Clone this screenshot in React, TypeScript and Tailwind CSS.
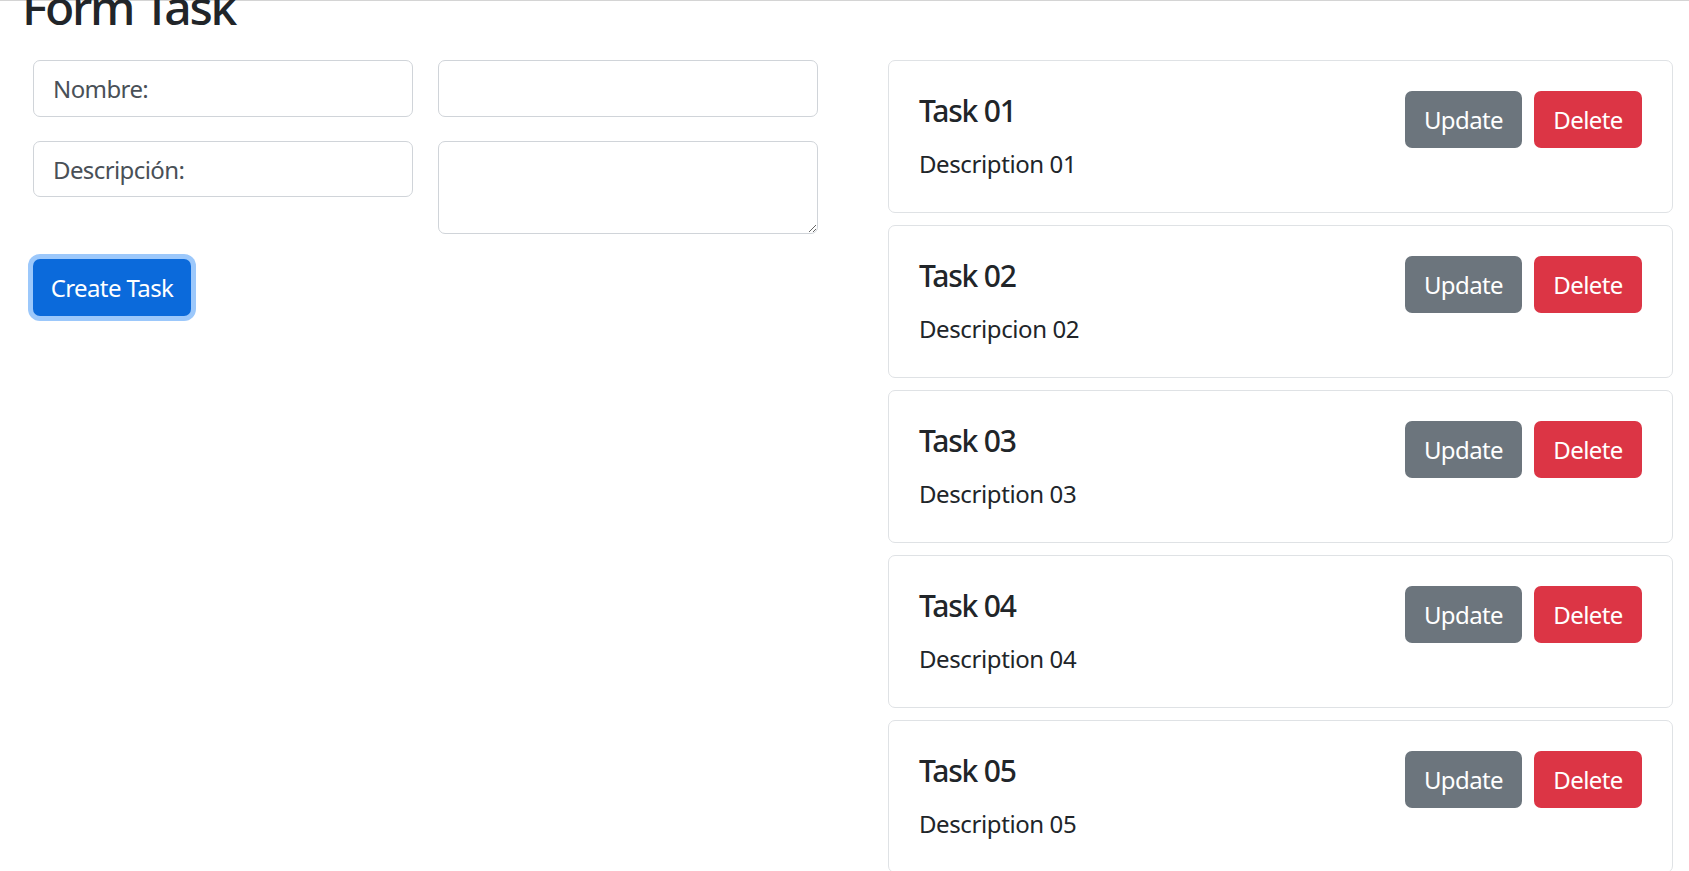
import React from 'react';

const tasks = [
  { title: 'Task 01', description: 'Description 01' },
  { title: 'Task 02', description: 'Descripcion 02' },
  { title: 'Task 03', description: 'Description 03' },
  { title: 'Task 04', description: 'Description 04' },
  { title: 'Task 05', description: 'Description 05' },
];

const App: React.FC = () => {
  return (
    <div className="min-h-screen bg-white text-[#212529] font-['Noto_Sans',sans-serif] tracking-[-0.025em] overflow-hidden">
      <div className="border-t border-[#d4d4d4]" />

      {/* Heading, scrolled partly out of view */}
      <h2 className="ml-[22px] -mt-[23px] mb-[24px] text-[48px] leading-[58px] font-medium tracking-[-0.048em]">Form Task</h2>

      <div className="flex">
        {/* Form column */}
        <div className="ml-[33px] w-[785px]">
          <div className="grid grid-cols-2 gap-x-[25px] gap-y-[24px]">
            <input
              readOnly
              value="Nombre:"
              className="h-[57px] w-full rounded-[7px] border border-[#d0d4d9] pl-[19px] text-[24px] tracking-[-0.025em] text-[#495057] outline-none"
            />
            <input className="h-[57px] w-full rounded-[7px] border border-[#d0d4d9] px-[19px] text-[24px] outline-none" />
            <input
              readOnly
              value="Descripción:"
              className="h-[56px] w-full self-start rounded-[7px] border border-[#d0d4d9] pl-[19px] text-[24px] tracking-[-0.025em] text-[#495057] outline-none"
            />
            <textarea className="block h-[93px] w-full rounded-[7px] border border-[#d0d4d9] px-[19px] py-[9px] text-[24px] outline-none" />
          </div>

          <button className="mt-[25px] h-[57px] w-[158px] rounded-[7px] bg-[#0b6adb] text-[24px] tracking-[-0.025em] text-white ring-[5px] ring-[#9cc8fb]">
            Create Task
          </button>
        </div>

        {/* Task list */}
        <div className="ml-[70px] flex w-[785px] flex-col gap-[12px]">
          {tasks.map((task) => (
            <div
              key={task.title}
              className="flex items-start justify-between rounded-[7px] border border-[#dfe2e5] p-[30px]"
            >
              <div>
                <h5 className="mt-[2px] mb-[17px] text-[30px] leading-[36px] font-medium tracking-[-0.04em] text-[#212529]">{task.title}</h5>
                <p className="text-[24px] leading-[36px] text-[#212529]">{task.description}</p>
              </div>
              <div className="flex gap-[12px]">
                <button className="h-[57px] w-[117px] rounded-[7px] bg-[#6c757d] text-[24px] tracking-[-0.025em] text-white">Update</button>
                <button className="h-[57px] w-[108px] rounded-[7px] bg-[#dc3545] text-[24px] tracking-[-0.025em] text-white">Delete</button>
              </div>
            </div>
          ))}
        </div>
      </div>
    </div>
  );
};

export default App;
